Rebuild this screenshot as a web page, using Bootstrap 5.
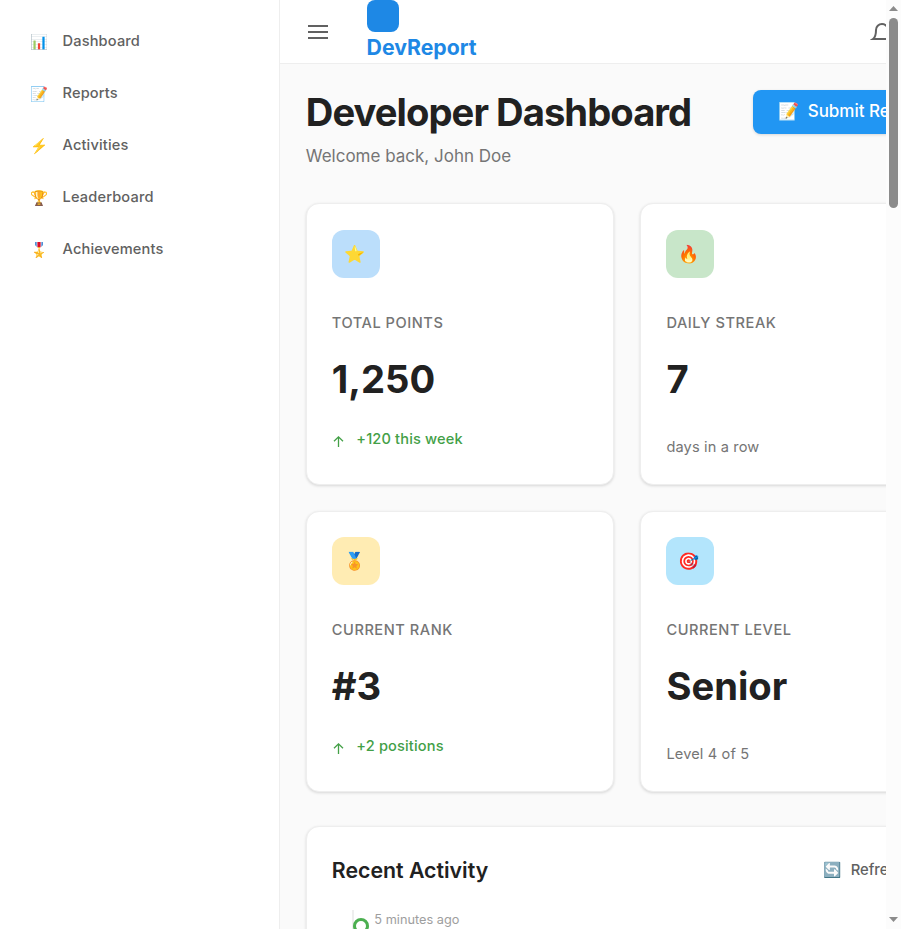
<!DOCTYPE html>
<html lang="en">
<head>
<meta charset="utf-8">
<meta name="viewport" content="width=device-width, initial-scale=1">
<title>DevReport</title>
<link href="https://cdn.jsdelivr.net/npm/bootstrap@5.3.0/dist/css/bootstrap.min.css" rel="stylesheet">
<style>
body{font-family:Inter,"Noto Color Emoji",sans-serif;font-size:16px;color:#212121;background:#fafafa}
.shell{height:929px}
.sidebar{width:280px;border-right:1px solid #eee;padding:15px 16px}
.side-link{height:52px;padding:0 14px;font-size:14.6px;letter-spacing:.16px;font-weight:500;color:#616161;text-decoration:none}
.side-icon{width:17px;margin-right:15.5px;padding-top:2px;font-size:14.5px}
.side-label{line-height:22px}
.viewport{min-width:0}
.canvas{width:1002px}
.topbar{height:64px;border-bottom:1px solid #eee;padding-left:26px}
.menu-btn{width:24px;height:24px;margin:1px 36.6px 0 0}
.brand{width:110px;font-size:21.25px;font-weight:700;line-height:30px;color:#1e88e5}
.brand-tile{width:32px;height:32px;border-radius:8px;background:#1e88e5}
.bell{margin:5px 0 0 393px}
.content{padding:26px 26px 0 25.8px}
.page-title{font-size:38.2px;font-weight:700;letter-spacing:-.95px;line-height:44px;margin:0}
.subtitle{font-size:17px;line-height:26px;color:#757575;margin-top:9px}
.page-head{height:113px}
.submit{width:200px;height:44px;padding:0 25px;margin-left:447.2px;background:#2196f3;border:0;border-radius:8px;color:#fff;font-size:17px;font-weight:500;box-shadow:0 1px 3px rgba(0,0,0,.14);white-space:nowrap}
.submit-label{margin-left:.5px}
.head-text{width:0;white-space:nowrap}
.stats{display:grid;grid-template-columns:308px 308px;column-gap:26.6px;row-gap:26px}
.panel{background:#fff;border:1px solid #eee;border-radius:13px;box-shadow:0 1px 3px rgba(0,0,0,.14)}
.stat{height:282px;padding:26px 25px}
.stat-low{height:281px;padding-top:25px}
.tile{width:48px;height:48px;border-radius:12px;font-size:17px;padding:2px 2px 0 0}
.t-blue{background:#bbdefb}.t-green{background:#c8e6c9}.t-amber{background:#ffecb3}.t-cyan{background:#b3e5fc}
.stat-label{font-size:14.6px;font-weight:500;letter-spacing:.54px;line-height:24px;color:#757575;margin-top:33px}
.stat-value{font-size:38.2px;font-weight:700;line-height:48px;margin-top:20px}
.delta{font-size:14.6px;letter-spacing:.14px;font-weight:500;line-height:24px;color:#43a047;margin-top:24px}
.delta svg{margin:5px 11.5px 0 0}
.note{font-size:14.6px;letter-spacing:.14px;line-height:24px;color:#757575;margin-top:32px}
.activity{margin-top:34px;padding:25px;height:300px}
.activity-title{width:156px;font-size:21.3px;font-weight:600;line-height:36px;white-space:nowrap}
.refresh{margin-left:336px;padding-top:1px;font-size:14.8px;font-weight:500;color:#616161;white-space:nowrap;line-height:23px}
.refresh-label{margin-left:.4px}
.timeline{margin:22px 0 0 20px;border-left:2px solid #eee;height:100px}
.ring{width:16px;height:16px;border:3px solid #4caf50;border-radius:50%;margin:8px 5.5px 0 -1px;background:#fff}
.ago{font-size:12.75px;line-height:20px;color:#9e9e9e}
.scroller{width:15px;background:#fcfcfc;padding:6px 0 6px}
.thumb{width:9px;height:190px;border-radius:5px;background:#8b8b8b;margin-top:6px}
</style>
<script src="https://cdn.jsdelivr.net/npm/bootstrap@5.3.0/dist/js/bootstrap.bundle.min.js"></script>
</head>
<body class="overflow-hidden">
<div class="shell d-flex">
  <nav class="sidebar bg-white flex-shrink-0 d-flex flex-column">
    <a class="side-link d-flex align-items-center" href="#"><span class="side-icon">📊</span><span class="side-label">Dashboard</span></a>
    <a class="side-link d-flex align-items-center" href="#"><span class="side-icon">📝</span><span class="side-label">Reports</span></a>
    <a class="side-link d-flex align-items-center" href="#"><span class="side-icon">⚡</span><span class="side-label">Activities</span></a>
    <a class="side-link d-flex align-items-center" href="#"><span class="side-icon">🏆</span><span class="side-label">Leaderboard</span></a>
    <a class="side-link d-flex align-items-center" href="#"><span class="side-icon">🎖️</span><span class="side-label">Achievements</span></a>
  </nav>
  <div class="viewport flex-grow-1 overflow-hidden">
    <div class="canvas">
      <header class="topbar bg-white d-flex align-items-start">
        <svg class="menu-btn align-self-center" viewBox="0 0 24 24" fill="none" stroke="#616161" stroke-width="2"><path d="M2 6h20M2 12h20M2 18h20"/></svg>
        <div class="brand"><div class="brand-tile"></div>DevReport</div>
        <svg class="bell align-self-center" width="24" height="24" viewBox="0 0 24 24" fill="none" stroke="#616161" stroke-width="2"><path d="M18 8A6 6 0 0 0 6 8c0 7-3 9-3 9h18s-3-2-3-9"/></svg>
      </header>
      <main class="content">
        <div class="page-head d-flex align-items-start">
          <div class="head-text"><h1 class="page-title">Developer Dashboard</h1><div class="subtitle">Welcome back, John Doe</div></div>
          <button class="submit d-flex align-items-center flex-shrink-0"><span class="me-2">📝</span><span class="submit-label">Submit Report</span></button>
        </div>
        <section class="stats">
          <article class="panel stat"><div class="tile t-blue d-flex align-items-center justify-content-center"><span class="glyph">⭐</span></div><div class="stat-label">TOTAL POINTS</div><div class="stat-value">1,250</div>
            <div class="delta d-flex align-items-center"><svg width="13" height="13" viewBox="0 0 13 13" fill="none" stroke="currentColor" stroke-width="1.3"><path d="M6.5 12V2M2 6.3 6.5 1.8 11 6.3"/></svg><span>+120 this week</span></div></article>
          <article class="panel stat"><div class="tile t-green d-flex align-items-center justify-content-center"><span class="glyph">🔥</span></div><div class="stat-label">DAILY STREAK</div><div class="stat-value">7</div><div class="note">days in a row</div></article>
          <article class="panel stat stat-low"><div class="tile t-amber d-flex align-items-center justify-content-center"><span class="glyph">🏅</span></div><div class="stat-label">CURRENT RANK</div><div class="stat-value">#3</div>
            <div class="delta d-flex align-items-center"><svg width="13" height="13" viewBox="0 0 13 13" fill="none" stroke="currentColor" stroke-width="1.3"><path d="M6.5 12V2M2 6.3 6.5 1.8 11 6.3"/></svg><span>+2 positions</span></div></article>
          <article class="panel stat stat-low"><div class="tile t-cyan d-flex align-items-center justify-content-center"><span class="glyph">🎯</span></div><div class="stat-label">CURRENT LEVEL</div><div class="stat-value">Senior</div><div class="note">Level 4 of 5</div></article>
        </section>
        <section class="panel activity">
          <div class="d-flex align-items-center"><div class="activity-title">Recent Activity</div><div class="refresh"><span class="me-2">🔄</span><span class="refresh-label">Refresh</span></div></div>
          <div class="timeline d-flex align-items-start"><span class="ring"></span><span class="ago">5 minutes ago</span></div>
        </section>
      </main>
    </div>
  </div>
  <div class="scroller flex-shrink-0 d-flex flex-column align-items-center">
    <svg width="9" height="6" viewBox="0 0 9 6"><path d="M0 5 4.5 0 9 5z" fill="#8b8b8b"/></svg>
    <div class="thumb"></div>
    <svg class="mt-auto" width="9" height="6" viewBox="0 0 9 6"><path d="M0 0h9L4.5 5z" fill="#8b8b8b"/></svg>
  </div>
</div>
</body>
</html>
